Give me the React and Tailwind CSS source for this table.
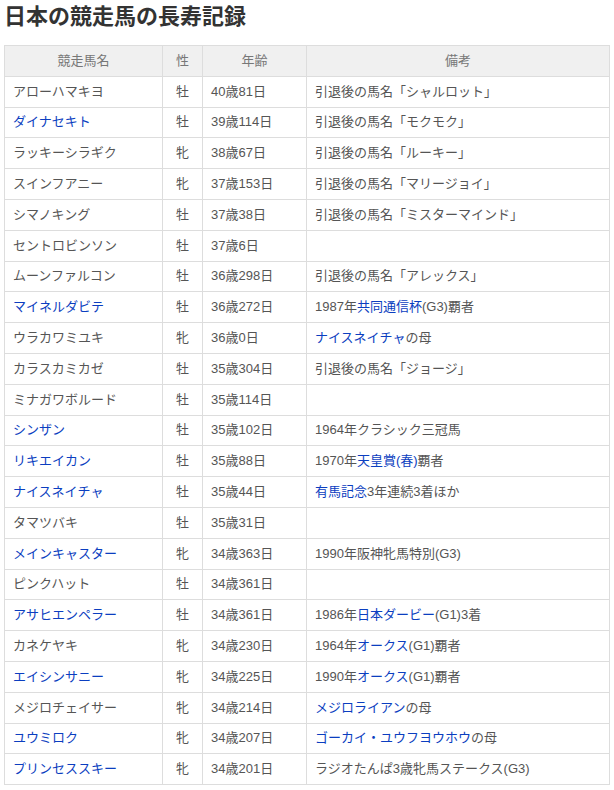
import React from 'react';

const rows = [
    { name: 'アローハマキヨ', sex: '牡', age: '40歳81日', note: [['引退後の馬名「シャルロット」']] },
    { name: 'ダイナセキト', link: true, sex: '牡', age: '39歳114日', note: [['引退後の馬名「モクモク」']] },
    { name: 'ラッキーシラギク', sex: '牝', age: '38歳67日', note: [['引退後の馬名「ルーキー」']] },
    { name: 'スインフアニー', sex: '牝', age: '37歳153日', note: [['引退後の馬名「マリージョイ」']] },
    { name: 'シマノキング', sex: '牡', age: '37歳38日', note: [['引退後の馬名「ミスターマインド」']] },
    { name: 'セントロビンソン', sex: '牡', age: '37歳6日', note: [] },
    { name: 'ムーンファルコン', sex: '牡', age: '36歳298日', note: [['引退後の馬名「アレックス」']] },
    { name: 'マイネルダビテ', link: true, sex: '牡', age: '36歳272日', note: [['1987年'], ['共同通信杯', true], ['(G3)覇者']] },
    { name: 'ウラカワミユキ', sex: '牝', age: '36歳0日', note: [['ナイスネイチャ', true], ['の母']] },
    { name: 'カラスカミカゼ', sex: '牡', age: '35歳304日', note: [['引退後の馬名「ジョージ」']] },
    { name: 'ミナガワボルード', sex: '牡', age: '35歳114日', note: [] },
    { name: 'シンザン', link: true, sex: '牡', age: '35歳102日', note: [['1964年クラシック三冠馬']] },
    { name: 'リキエイカン', link: true, sex: '牡', age: '35歳88日', note: [['1970年'], ['天皇賞(春)', true], ['覇者']] },
    { name: 'ナイスネイチャ', link: true, sex: '牡', age: '35歳44日', note: [['有馬記念', true], ['3年連続3着ほか']] },
    { name: 'タマツバキ', sex: '牡', age: '35歳31日', note: [] },
    { name: 'メインキャスター', link: true, sex: '牝', age: '34歳363日', note: [['1990年阪神牝馬特別(G3)']] },
    { name: 'ピンクハット', sex: '牡', age: '34歳361日', note: [] },
    { name: 'アサヒエンペラー', link: true, sex: '牡', age: '34歳361日', note: [['1986年'], ['日本ダービー', true], ['(G1)3着']] },
    { name: 'カネケヤキ', sex: '牝', age: '34歳230日', note: [['1964年'], ['オークス', true], ['(G1)覇者']] },
    { name: 'エイシンサニー', link: true, sex: '牝', age: '34歳225日', note: [['1990年'], ['オークス', true], ['(G1)覇者']] },
    { name: 'メジロチェイサー', sex: '牝', age: '34歳214日', note: [['メジロライアン', true], ['の母']] },
    { name: 'ユウミロク', link: true, sex: '牝', age: '34歳207日', note: [['ゴーカイ・ユウフヨウホウ', true], ['の母']] },
    { name: 'プリンセススキー', link: true, sex: '牝', age: '34歳201日', note: [['ラジオたんぱ3歳牝馬ステークス(G3)']] },
];

const td = 'border border-[#dddddd] px-[8px] py-[5px] h-[30.8px] align-middle';

const App = () => {
    return (
        <div
            className="bg-white min-h-[790px] px-[4px] pt-[2px] text-[13px] text-[#555555]"
            style={{ fontFamily: '"Liberation Sans", "Noto Sans CJK JP", sans-serif' }}
        >
            <h1 className="text-[22px] font-bold leading-[30px] text-[#333333] mb-[13px]">日本の競走馬の長寿記録</h1>
            <table className="w-[606px] border-collapse table-fixed leading-[18px]">
                <colgroup>
                    <col className="w-[158px]" />
                    <col className="w-[40px]" />
                    <col className="w-[104px]" />
                    <col />
                </colgroup>
                <thead>
                    <tr className="bg-[#f0f0f0] text-[#777777]">
                        <th className={`${td} font-normal text-center`}>競走馬名</th>
                        <th className={`${td} font-normal text-center`}>性</th>
                        <th className={`${td} font-normal text-center`}>年齢</th>
                        <th className={`${td} font-normal text-center`}>備考</th>
                    </tr>
                </thead>
                <tbody>
                    {rows.map((r) => (
                        <tr key={r.name}>
                            <td className={`${td} ${r.link ? 'text-[#0b3ec0]' : ''}`}>{r.name}</td>
                            <td className={`${td} text-center`}>{r.sex}</td>
                            <td className={td}>{r.age}</td>
                            <td className={td}>
                                {r.note.map(([t, isLink], i) => (
                                    <span key={i} className={isLink ? 'text-[#0b3ec0]' : ''}>{t}</span>
                                ))}
                            </td>
                        </tr>
                    ))}
                </tbody>
            </table>
        </div>
    );
};

export default App;
